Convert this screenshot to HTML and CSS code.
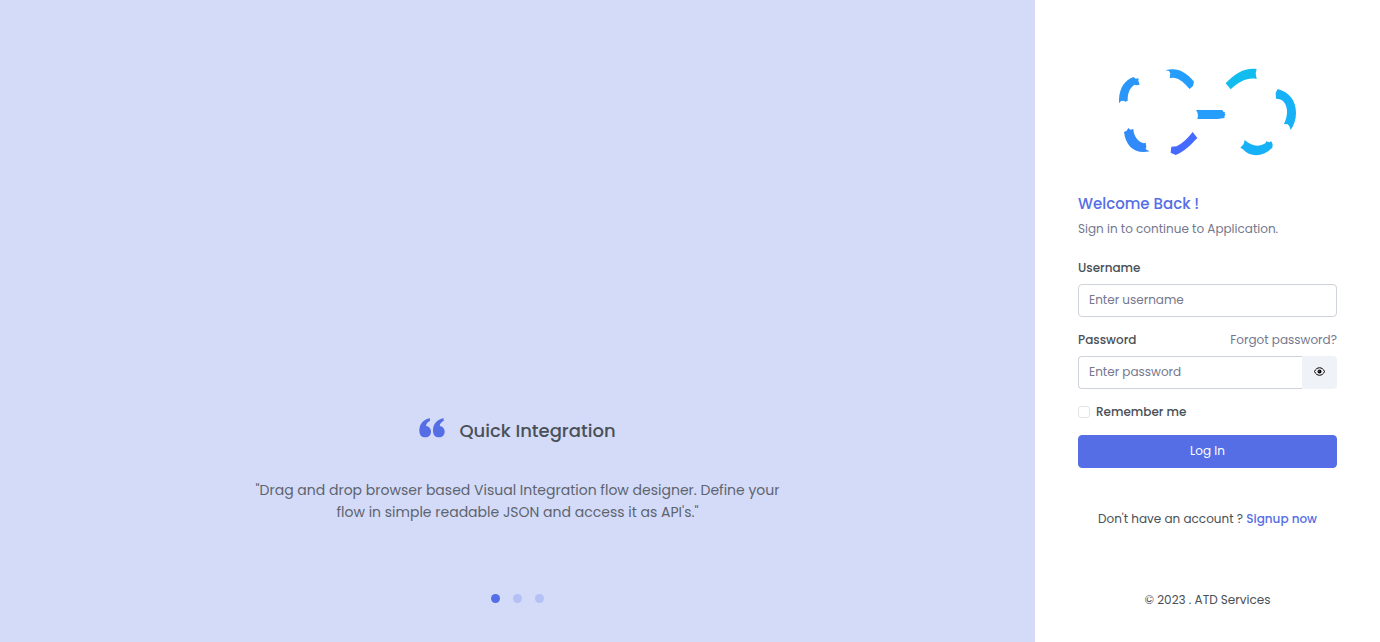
FILE: index.html
```html
<!DOCTYPE html>
<html lang="en">
<head>
<meta charset="utf-8">
<meta name="viewport" content="width=device-width, initial-scale=1">
<title>Login | ATD Services</title>
<link rel="stylesheet" href="styles.css">
</head>
<body>
<div class="page">
  <section class="promo">
    <div class="promo-title">
      <svg class="quote" viewBox="0 0 78 58" aria-hidden="true"><path d="M33 0C12 3 1 18 1 37c0 13 7 20 18 20 10 0 17-7 17-17 0-9-6-16-15-17 1-7 5-12 12-15z"/><path d="M74 0C53 3 42 18 42 37c0 13 7 20 18 20 10 0 17-7 17-17 0-9-6-16-15-17 1-7 5-12 12-15z"/></svg>
      <h2>Quick Integration</h2>
    </div>
    <p class="promo-text">"Drag and drop browser based Visual Integration flow designer. Define your<br>flow in simple readable JSON and access it as API's."</p>
    <div class="dots">
      <button class="dot active" type="button" aria-label="Slide 1"></button>
      <button class="dot" type="button" aria-label="Slide 2"></button>
      <button class="dot" type="button" aria-label="Slide 3"></button>
    </div>
  </section>
  <main class="panel">
    <svg class="logo" viewBox="0 0 534 264" role="img" aria-label="ATD Services">
      <g transform="translate(-27 -24)">
        <path fill="#2b96fa" d="M27 130C25 88 42 61 71 51l6 5 9-1-1 7 4 12-9 2-6-2C59 83 53 98 53 122l-6 3-6-3-8 1z"/>
        <path fill="#249dfd" d="M166 31c33-10 60 2 86 34l-3 13-10 9c-15-18-29-31-48-34l-12 1 2-14-4-7z"/>
        <path fill="#308af9" d="M42 216l8-4 5-8 6 5 9-2c1 22 14 38 31 43l6-2 2 12-2 8 12 6c-46 10-72-17-77-58z"/>
        <path fill="#456aff" d="M248 216l14 18c-20 21-41 42-65 51l-15-7 2-18 16-1c17-9 33-24 48-43z"/>
      </g>
      <g transform="translate(213 -24)">
        <path fill="#249dfd" d="M18 150h79l3 5 5 2-1 5 3 2-4 5 1 5-22 3H22l2-10-2-10z"/>
        <path fill="#11bdef" d="M107 70c31-34 61-48 93-43l-3 13 3 17c-27-5-50 6-78 31z"/>
        <path fill="#16b1f7" d="M263 87c35 9 55 35 55 72 0 19-6 37-16 51l-4-12-5-5-11-1c13-27 12-51-1-67-6-8-13-8-23-9l-1-17z"/>
        <path fill="#16b1f7" d="M164 240c23 21 44 20 62 10l3-6 9 3 6-3 4 9-1 10c-29 29-66 30-89 4l-7-4 10-11z"/>
      </g>
    </svg>
    <h1>Welcome Back !</h1>
    <p class="subtitle">Sign in to continue to Application.</p>
    <form>
      <label class="label" for="username">Username</label>
      <input class="field" id="username" type="text" placeholder="Enter username">
      <div class="label-row">
        <label class="label" for="password">Password</label>
        <a class="forgot" href="#">Forgot password?</a>
      </div>
      <div class="group">
        <input class="field" id="password" type="password" placeholder="Enter password">
        <button class="reveal" type="button" aria-label="Show password">
          <svg viewBox="0 0 22 18" aria-hidden="true"><path d="M1 9C5-1 17-1 21 9 17 19 5 19 1 9Z" fill="none" stroke="currentColor" stroke-width="2"/><circle cx="11" cy="9" r="4"/><circle cx="10" cy="8" r="1" fill="#eff2f7"/></svg>
        </button>
      </div>
      <div class="remember">
        <input id="remember" type="checkbox">
        <label for="remember">Remember me</label>
      </div>
      <button class="submit" type="submit">Log In</button>
    </form>
    <p class="signup">Don't have an account ? <a href="#">Signup now</a></p>
    <footer>© 2023 . ATD Services</footer>
  </main>
</div>
</body>
</html>
```
FILE: styles.css
```css
* { box-sizing: border-box; }

body {
  margin: 0;
  font-family: Poppins, Inter, sans-serif;
  font-size: 12px;
  line-height: 20px;
  color: #495057;
  background: #fff;
}

h1, h2, p { margin: 0; }
a { text-decoration: none; }
button, input { font: inherit; }

.page {
  display: grid;
  grid-template-columns: 3fr 1fr;
  min-height: 100vh;
}

.promo {
  display: flex;
  flex-direction: column;
  align-items: center;
  justify-content: flex-end;
  padding: 0 24px 39px;
  background: #d4dbf9;
}

.promo-title {
  display: flex;
  gap: 14px;
  margin-bottom: 36px;
}

.quote {
  width: 26px;
  height: 20px;
  fill: #556ee6;
}

h2 {
  padding-top: 1px;
  font-size: 18px;
  font-weight: 500;
  line-height: 24px;
}

.promo-text {
  margin-bottom: 71px;
  font-size: 14px;
  line-height: 22px;
  text-align: center;
  color: #5d646e;
}

.dots {
  display: flex;
  gap: 13px;
}

.dot {
  width: 9px;
  height: 9px;
  padding: 0;
  border: 0;
  border-radius: 50%;
  background: #b4c0f6;
}

.dot.active { background: #556ee6; }

.panel {
  display: flex;
  flex-direction: column;
  padding: 68px 43px 32px;
}

.logo {
  align-self: center;
  width: 178px;
  height: 88px;
}

h1 {
  margin-top: 37px;
  font-size: 15px;
  font-weight: 500;
  line-height: 21px;
  color: #556ee6;
}

.subtitle {
  margin-top: 5px;
  color: #74788d;
}

form {
  display: flex;
  flex-direction: column;
  margin-top: 19px;
}

.label, .remember { font-weight: 500; }

.field {
  width: 100%;
  height: 33px;
  padding: 0 10px 2px;
  border: 1px solid #ced4da;
  border-radius: 4px;
  color: #495057;
  background: #fff;
}

.field::placeholder { color: #74788d; opacity: 1; }

.label + .field { margin-top: 6px; }

.label-row {
  display: flex;
  justify-content: space-between;
  margin: 13px 0 6px;
}

.forgot { color: #74788d; }

.group { display: flex; }

.group .field {
  flex: 1;
  min-width: 0;
  border-right: 0;
  border-radius: 4px 0 0 4px;
}

.reveal {
  display: flex;
  align-items: center;
  justify-content: center;
  width: 35px;
  padding: 0 0 2px;
  border: 0;
  border-radius: 0 4px 4px 0;
  color: #000;
  background: #eff2f7;
}

.reveal svg {
  width: 11px;
  height: 9px;
}

.remember {
  display: flex;
  align-items: center;
  gap: 6px;
  margin: 13px 0;
}

.remember input {
  appearance: none;
  width: 12px;
  height: 12px;
  margin: 0;
  border: 1px solid #e3e5e8;
  border-radius: 3px;
  background: #fff;
}

.submit {
  height: 33px;
  padding: 0 0 2px;
  border: 1px solid #556ee6;
  border-radius: 4px;
  color: #fff;
  background: #556ee6;
}

.signup {
  margin-top: 41px;
  text-align: center;
}

.signup a { font-weight: 500; color: #556ee6; }

footer {
  margin-top: auto;
  text-align: center;
}
```
